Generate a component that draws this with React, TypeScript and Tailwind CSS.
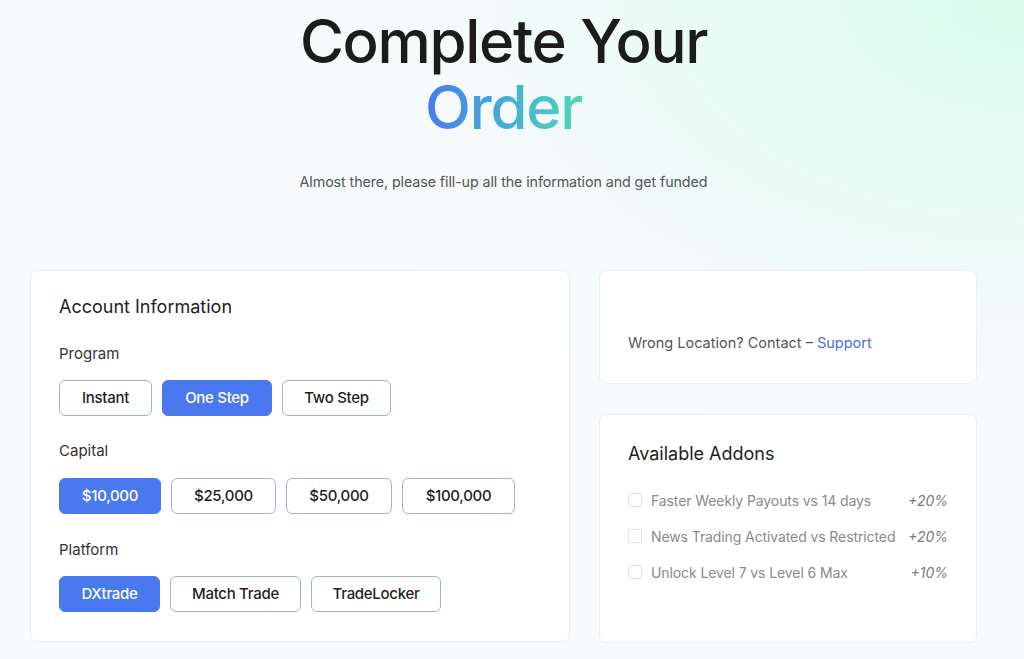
import { useState } from "react";

const programs = ["Instant", "One Step", "Two Step"];
const programW = ["w-[93px]", "w-[110px]", "w-[109px]"];
const capitals = ["$10,000", "$25,000", "$50,000", "$100,000"];
const capitalW = ["w-[102px]", "w-[105px]", "w-[106px]", "w-[113px]"];
const platforms = ["DXtrade", "Match Trade", "TradeLocker"];
const platformW = ["w-[101px]", "w-[131px]", "w-[130px]"];

const addons = [
    { label: "Faster Weekly Payouts vs 14 days", pct: "+20%" },
    { label: "News Trading Activated vs Restricted", pct: "+20%" },
    { label: "Unlock Level 7 vs Level 6 Max", pct: "+10%" },
];

function Choice({
    items,
    widths,
    active,
    onPick,
}: {
    items: string[];
    widths: string[];
    active: number;
    onPick: (i: number) => void;
}) {
    return (
        <div className="flex gap-[10px]">
            {items.map((item, i) => (
                <button
                    key={item}
                    onClick={() => onPick(i)}
                    className={`${widths[i]} h-[36px] rounded-[6px] text-[15px] font-medium tracking-[-0.3px] ${
                        active === i
                            ? "bg-[#4a78ee] text-white border border-[#4a78ee]"
                            : "bg-white text-[#1f1f1f] border border-[#9fb0dc]"
                    }`}
                >
                    {item}
                </button>
            ))}
        </div>
    );
}

export default function App() {
    const [program, setProgram] = useState(1);
    const [capital, setCapital] = useState(0);
    const [platform, setPlatform] = useState(0);
    const [checked, setChecked] = useState<boolean[]>([false, false, false]);

    return (
        <div className="min-h-[659px] w-full font-['Inter',sans-serif] bg-[#f9fafb] bg-[radial-gradient(ellipse_85%_80%_at_100%_0%,#d9fbee_0%,#e9fbf5_35%,#f5fafb_70%,#f9fafb_100%)] overflow-hidden">
            <div className="w-[1007px]">
                {/* ===== TITLE ===== */}
                <header className="pt-[8px] text-center">
                    <h1 className="text-[60px] leading-[66px] font-medium tracking-[-1.3px] text-[#1c1c1c]">
                        Complete Your
                        <br />
                        <span className="bg-linear-to-r from-[#4a78ef] to-[#4fd9b3] bg-clip-text text-transparent">
                            Order
                        </span>
                    </h1>
                    <p className="mt-[32px] text-[14.3px] leading-[20px] tracking-[-0.1px] text-[#555]">
                        Almost there, please fill-up all the information and get funded
                    </p>
                </header>

                <div className="mt-[78px] ml-[30px] flex gap-[29px] items-start">
                    {/* ===== ACCOUNT INFO ===== */}
                    <section className="w-[540px] h-[372px] rounded-[8px] bg-white border border-[#eceef2] px-[28px] pt-[24px]">
                        <h2 className="text-[18px] leading-[24px] text-[#222]">Account Information</h2>

                        <p className="mt-[25px] text-[15px] leading-[20px] text-[#333]">Program</p>
                        <div className="mt-[16px]">
                            <Choice items={programs} widths={programW} active={program} onPick={setProgram} />
                        </div>

                        <p className="mt-[25px] text-[15px] leading-[20px] text-[#333]">Capital</p>
                        <div className="mt-[17px]">
                            <Choice items={capitals} widths={capitalW} active={capital} onPick={setCapital} />
                        </div>

                        <p className="mt-[26px] text-[15px] leading-[20px] text-[#333]">Platform</p>
                        <div className="mt-[16px]">
                            <Choice items={platforms} widths={platformW} active={platform} onPick={setPlatform} />
                        </div>
                    </section>

                    <div className="w-[378px] flex flex-col gap-[30px]">
                        {/* ===== LOCATION ===== */}
                        <section className="h-[114px] rounded-[8px] bg-white border border-[#eceef2] px-[28px] pt-[62px]">
                            <p className="text-[14.5px] leading-[20px] text-[#555]">
                                Wrong Location? Contact –{" "}
                                <a href="#" className="text-[#4a6fdc]">
                                    Support
                                </a>
                            </p>
                        </section>

                        {/* ===== ADDONS ===== */}
                        <section className="h-[229px] rounded-[8px] bg-white border border-[#eceef2] px-[28px] pt-[27px]">
                            <h2 className="text-[18px] leading-[24px] text-[#222]">Available Addons</h2>
                            <div className="mt-[24px] flex flex-col gap-[16px]">
                                {addons.map((a, i) => (
                                    <label key={a.label} className="flex items-center h-[20px] cursor-pointer">
                                        <input
                                            type="checkbox"
                                            checked={checked[i]}
                                            onChange={() =>
                                                setChecked((c) => c.map((v, j) => (j === i ? !v : v)))
                                            }
                                            className="appearance-none w-[14px] h-[14px] border border-[#e3e3e3] rounded-[2px] bg-white checked:bg-[#4a78ee]"
                                        />
                                        <span className="ml-[9px] flex-1 text-[14px] text-[#8a8a8a] tracking-[-0.1px]">
                                            {a.label}
                                        </span>
                                        <span className="text-[14px] italic text-[#7a7a7a]">{a.pct}</span>
                                    </label>
                                ))}
                            </div>
                        </section>
                    </div>
                </div>
            </div>
        </div>
    );
}
